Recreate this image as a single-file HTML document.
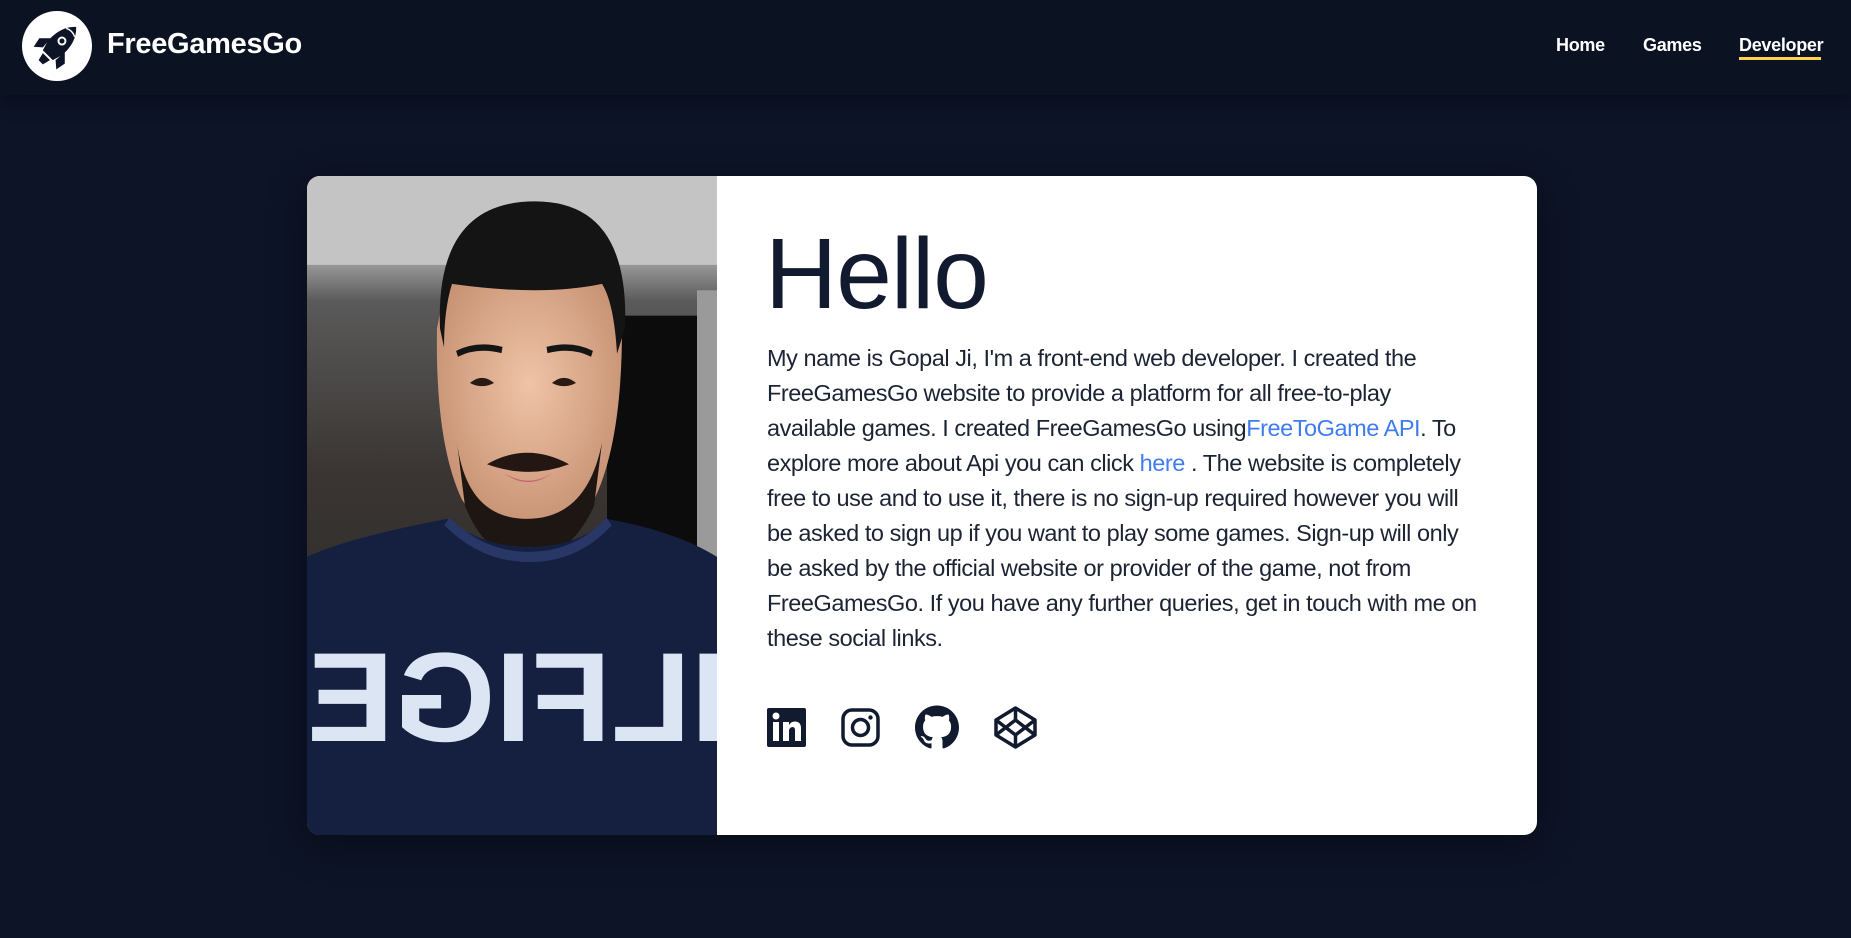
<!DOCTYPE html>
<html><head><meta charset="utf-8">
<style>
*{margin:0;padding:0;box-sizing:border-box}
html,body{width:1851px;height:938px;overflow:hidden;background:#0d1427;font-family:"Liberation Sans",sans-serif}
.hdr{position:absolute;left:0;top:0;width:1851px;height:95px;background:#0b1222;box-shadow:0 6px 18px rgba(0,0,0,.35);z-index:2}
.logo{position:absolute;left:22px;top:11px;width:70px;height:70px;border-radius:50%;background:#fff}
.brand{position:absolute;left:107px;top:28px;color:#fff;font-weight:bold;font-size:29px;letter-spacing:-0.3px}
.nav a{position:absolute;top:35px;color:#fff;font-weight:bold;font-size:18px;text-decoration:none;letter-spacing:-0.3px}
.ul{position:absolute;left:1739px;top:57px;width:82px;height:3px;background:#fcd34d}
.card{position:absolute;left:307px;top:176px;width:1230px;height:659px;background:#fff;border-radius:13px;overflow:hidden;box-shadow:0 10px 40px rgba(0,0,0,.4)}
.photo{position:absolute;left:0;top:0;width:410px;height:659px}
h1{position:absolute;left:458px;top:48px;font-weight:normal;font-size:100px;color:#111a2e;letter-spacing:-1px;line-height:1}
p{position:absolute;left:460px;top:165px;font-size:23.5px;line-height:35px;color:#1c2333;white-space:nowrap;letter-spacing:-0.45px}
p a{color:#3f7cf0;text-decoration:none}
.icons svg{position:absolute}
</style></head><body>
<div class="hdr">
 <div class="logo">
  <svg width="70" height="70" viewBox="0 0 70 70">
   <g fill="#0d1427" transform="rotate(45 35 35)">
    <path d="M35 8c8 7 11 18 10 30l-3 10H28l-3-10c-1-12 2-23 10-30z"/>
    <path d="M25 34l-8 8 2 10 7-6zM45 34l8 8-2 10-7-6z"/>
    <path d="M30 50h10l-2 8h-6z"/>
    <circle cx="35" cy="28" r="4.5" fill="#fff"/><circle cx="35" cy="28" r="2.5" fill="#0d1427"/>
    <path d="M29 16q6-3 12 0" stroke="#fff" stroke-width="1.5" fill="none"/>
   </g>
  </svg>
 </div>
 <div class="brand">FreeGamesGo</div>
 <div class="nav"><a style="left:1556px">Home</a><a style="left:1643px">Games</a><a style="left:1739px">Developer</a></div>
 <div class="ul"></div>
</div>

<div class="card">
 <svg class="photo" viewBox="0 0 410 519" preserveAspectRatio="none">
  <defs>
   <linearGradient id="bg" x1="0" y1="0" x2="0" y2="1"><stop offset="0" stop-color="#d8d8d8"/><stop offset=".12" stop-color="#a8a8a8"/><stop offset=".19" stop-color="#5a5a5a"/><stop offset=".45" stop-color="#3a3532"/><stop offset="1" stop-color="#222"/></linearGradient>
   <radialGradient id="sk" cx=".5" cy=".4" r=".6"><stop offset="0" stop-color="#f0c3a6"/><stop offset="1" stop-color="#c48e70"/></radialGradient>
  </defs>
  <rect width="410" height="519" fill="url(#bg)"/>
  <rect x="0" y="0" width="410" height="70" fill="#c4c4c4"/>
  <rect x="300" y="110" width="90" height="190" fill="#0c0c0c"/>
  <rect x="390" y="90" width="20" height="210" fill="#9a9a9a"/>
  <path d="M130 120q-2 90 25 135q30 35 67 35q38 0 65-35q28-45 28-135l-10-40H140z" fill="url(#sk)"/>
  <path d="M150 210q10 60 70 60q60 0 75-60l-8 50q-25 42-67 42q-40 0-62-42z" fill="#1e1612"/>
  <path d="M180 227q40-18 82 0q-40 12-82 0z" fill="#241612"/>
  <path d="M197 234q25 12 48 0q-24 14-48 0z" fill="#c65c6d"/>
  <path d="M163 163q12-8 24 0q-12 5-24 0zM245 163q12-8 24 0q-12 5-24 0z" fill="#2a1a14"/>
  <path d="M150 140q20-8 45-3M240 137q25-5 45 3" stroke="#151515" stroke-width="5" fill="none"/>
  <path d="M133 120q-5-100 95-100q95 0 90 100l-8 20q-3-40-15-55q-60 10-150 0q-8 20-8 50z" fill="#141414"/>
  <path d="M0 300q40-15 140-30q35 22 82 22q50 0 78-22q70 10 110 30v219H0z" fill="#152040"/>
  <path d="M140 272q35 28 82 28q48 0 80-28" stroke="#283766" stroke-width="8" fill="none"/>
  <g fill="#dbe5f3" font-family="Liberation Sans" font-weight="bold" font-size="100">
   <text x="-10" y="445" transform="scale(-1,1) translate(-410,0)" textLength="420" lengthAdjust="spacingAndGlyphs">ILFIGE</text>
  </g>
 </svg>
 <h1>Hello</h1>
 <p>My name is Gopal Ji, I'm a front-end web developer. I created the<br>FreeGamesGo website to provide a platform for all free-to-play<br>available games. I created FreeGamesGo using<a>FreeToGame API</a>. To<br>explore more about Api you can click <a>here</a> . The website is completely<br>free to use and to use it, there is no sign-up required however you will<br>be asked to sign up if you want to play some games. Sign-up will only<br>be asked by the official website or provider of the game, not from<br>FreeGamesGo. If you have any further queries, get in touch with me on<br>these social links.</p>
 <div class="icons">
  <svg style="left:460px;top:532px" width="39" height="39" viewBox="0 0 39 39"><rect width="39" height="39" rx="2" fill="#111a2e"/><rect x="6" y="14" width="6" height="19" fill="#fff"/><circle cx="9" cy="8" r="3.5" fill="#fff"/><path d="M16 14h6v3q2-3.5 6-3.5q6 0 6 7V33h-6V22q0-3-2.5-3T22 22v11h-6z" fill="#fff"/></svg>
  <svg style="left:534px;top:532px" width="39" height="39" viewBox="0 0 39 39"><rect x="2" y="2" width="35" height="35" rx="9" fill="none" stroke="#111a2e" stroke-width="3.5"/><circle cx="19.5" cy="19.5" r="8" fill="none" stroke="#111a2e" stroke-width="3.5"/><circle cx="29.5" cy="9.5" r="2.2" fill="#111a2e"/></svg>
  <svg style="left:608px;top:529px" width="44" height="45" viewBox="0 0 16 16"><path fill="#111a2e" d="M8 0C3.58 0 0 3.58 0 8c0 3.54 2.29 6.53 5.47 7.59.4.07.55-.17.55-.38 0-.19-.01-.82-.01-1.49-2.01.37-2.53-.49-2.69-.94-.09-.23-.48-.94-.82-1.130-.28-.15-.68-.52-.01-.53.63-.01 1.08.58 1.23.82.72 1.21 1.87.87 2.33.66.07-.52.28-.87.51-1.07-1.78-.2-3.64-.89-3.64-3.95 0-.87.31-1.59.82-2.15-.08-.2-.36-1.02.08-2.12 0 0 .67-.21 2.2.82.64-.18 1.32-.27 2-.27.68 0 1.36.09 2 .27 1.53-1.04 2.2-.82 2.2-.82.44 1.1.16 1.92.08 2.12.51.56.82 1.27.82 2.15 0 3.07-1.87 3.75-3.65 3.95.29.25.54.73.54 1.48 0 1.07-.01 1.93-.01 2.2 0 .21.15.46.55.38A8.013 8.013 0 0 0 16 8c0-4.42-3.58-8-8-8z"/></svg>
  <svg style="left:686px;top:529px" width="45" height="45" viewBox="0 0 45 45" fill="none" stroke="#111a2e" stroke-width="3.5" stroke-linejoin="round"><path d="M22.5 3L42 15v15L22.5 42 3 30V15z"/><path d="M22.5 3v12M22.5 30v12M3 15l19.5 15L42 15M3 30l19.5-15L42 30"/></svg>
 </div>
</div>
</body></html>
